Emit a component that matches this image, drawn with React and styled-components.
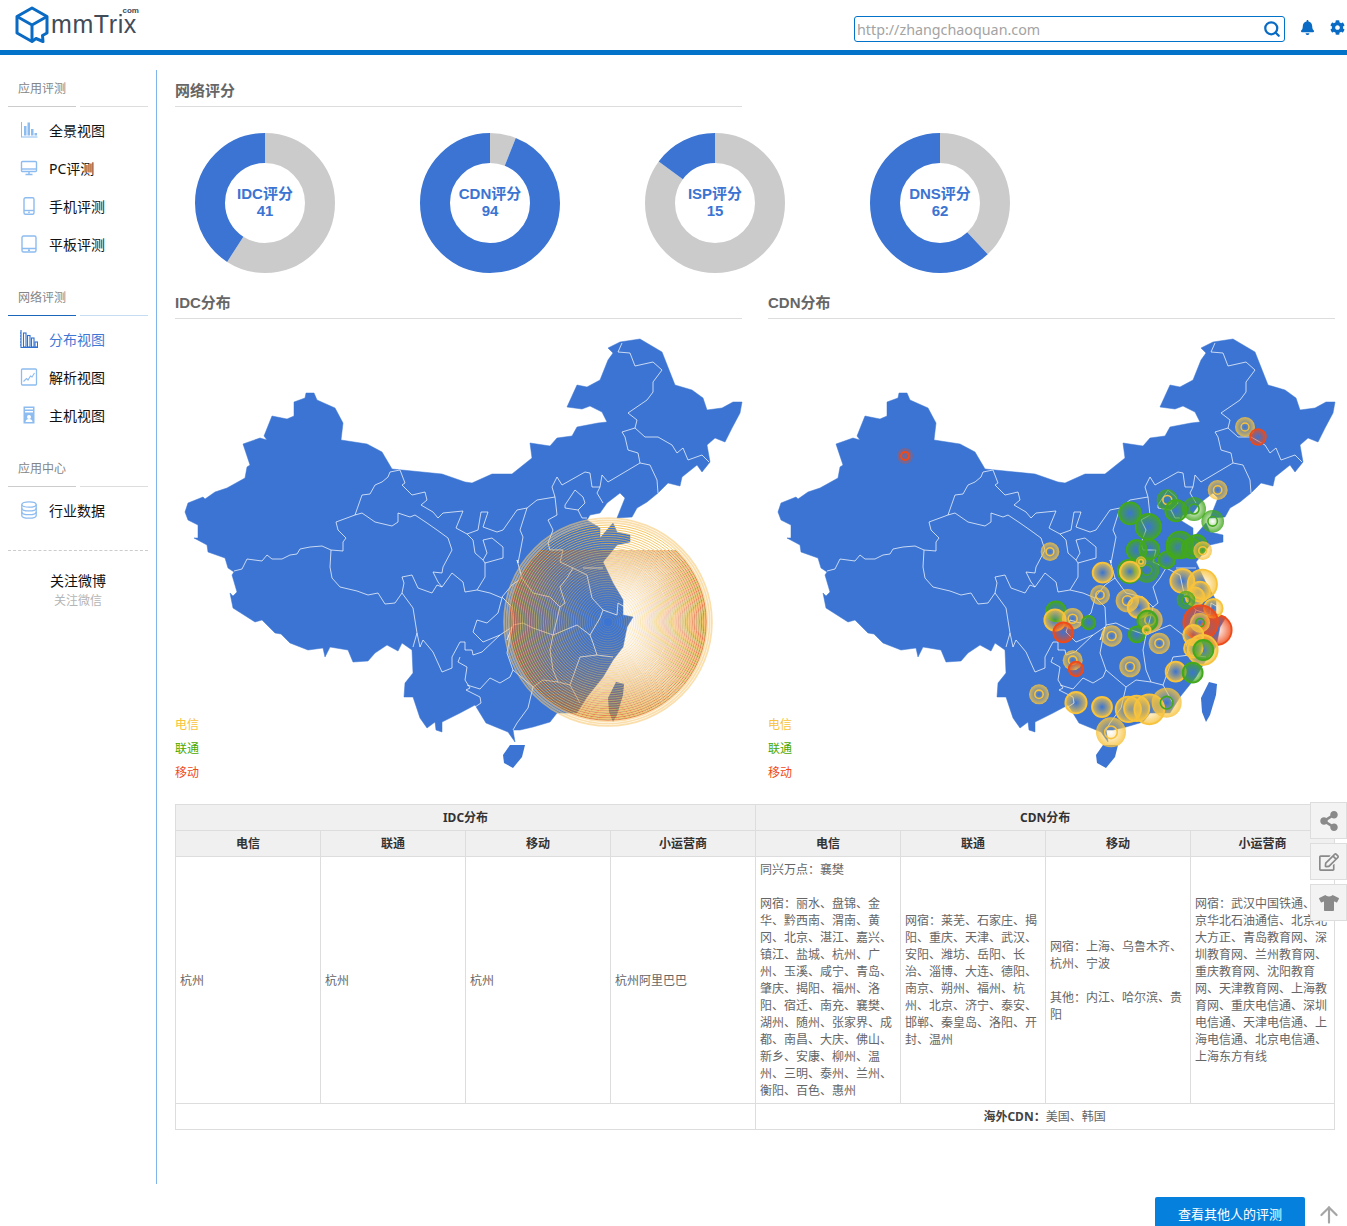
import React from "react";
import styled, { createGlobalStyle } from "styled-components";
import { FaBell, FaCog, FaShareAlt, FaRegEdit, FaTshirt } from "react-icons/fa";
import { Search, ArrowUp } from "lucide-react";

const BLUE = "#3b74d2";
const YELLOW = "#f8c33c";
const GREEN = "#42a81c";
const RED = "#ef4a18";

// outline of the country, traced in page px of the left map
const OUTLINE =
  "M185 512 188 503 203 497 205 499 215 492 227 488 245 478 247 467 250 465 243 444 260 438 267 440 264 436 272 416 287 419 294 416 294 402 305 398 306 393 314 393 317 400 335 408 343 423 341 440 367 444 382 452 392 469 402 470 422 472 442 474 465 482 472 483 492 474 512 474 532 458 530 443 550 446 557 438 572 436 577 427 598 423 607 422 602 412 590 406 582 409 567 407 577 385 587 387 600 380 608 360 613 353 608 348 620 342 640 339 662 352 675 385 692 390 703 398 707 410 722 408 733 402 742 402 740 413 732 428 725 442 715 438 707 445 710 462 702 472 697 465 682 477 680 486 668 483 658 493 647 502 637 508 632 517 617 518 625 498 620 493 607 503 600 513 590 515 587 520 600 528 600 538 613 523 617 532 630 535 630 542 617 545 603 562 613 583 623 600 623 615 633 617 627 627 623 647 613 660 603 677 587 697 577 713 557 713 550 722 533 727 520 730 513 730 515 742 508 732 486 723 475 705 460 713 442 722 442 732 436 730 435 722 427 728 420 718 413 697 404 697 405 683 413 673 412 650 402 643 398 651 387 645 375 653 368 661 353 662 348 650 330 647 325 657 323 648 308 650 290 643 281 634 275 633 262 620 255 622 233 608 230 593 233 596 237 592 232 575 234 572 228 568 225 558 208 552 207 545 194 538 198 538 198 525 188 520Z";
const HAINAN = "M503 755 510 745 525 745 522 757 513 768 504 763Z";
const TAIWAN = "M616 682 624 684 623 695 617 715 613 722 609 712 608 698Z";

const BORDERS = [
  "M234 571 242 569 247 559 262 561 267 555 272 559 282 559 290 555 297 554 300 549 310 547 322 546 331 550 343 551 343 542 346 538 338 530 336 522 355 515 362 495 370 494 375 485 382 482 388 477 390 472 400 470 405 483 402 485 412 495 425 492 427 500 421 505 433 512 438 518 443 513 463 511 456 528 467 534 478 530 481 512 488 512 483 527 497 532 503 530 517 510 527 508 537 500 555 497 552 487 557 477 562 485 585 472 590 473 592 487 600 487 602 475 608 482 640 463 638 453 628 450 625 437 622 432 635 428 637 420 628 413 647 400 653 392 653 382 662 370 653 362 635 366 630 353 618 352 622 343",
  "M355 515 362 513 375 522 392 526 398 522 398 513 410 517 415 515 427 523 437 530 448 538 452 550 443 567 442 573 433 572 438 582 442 587 437 585 432 593 418 588 412 575 402 577 404 583 402 593 395 603 385 604 378 593 368 595 357 591 340 587 332 578 330 567 331 550",
  "M402 593 413 608 417 633 413 647 M417 633 420 647 423 640 433 652 442 672 452 668 452 657 460 642 465 642 465 650 472 650 473 655 482 652 500 635 512 627 507 653 513 670",
  "M460 657 458 662 467 667 465 680 470 688 466 690 480 697 481 703 475 707 M467 685 480 689 490 678 500 683 510 677 513 670 533 687 528 708 517 723 513 730",
  "M442 587 452 573 463 582 465 592 477 590 490 593 502 598 498 613 487 623 477 620 473 632 483 642 500 635",
  "M477 590 485 577 485 563 503 558 503 547 492 538 483 540 487 553 483 560 475 553 473 540 467 534",
  "M485 563 483 560 M527 508 520 530 523 537 518 563 517 560 522 578 512 585 502 597 M522 578 533 593 550 597 560 607 565 603 560 587 567 578 573 568 560 562 563 550 550 550 548 543 553 530 548 520 557 515 555 497",
  "M565 505 575 490 583 497 585 503 578 510 565 508 565 505 M578 510 582 518 587 518",
  "M560 607 553 635 577 625 590 635 600 618 603 610 592 598 587 575 573 568 M583 568 603 568",
  "M603 610 617 615 618 603 625 607 M590 635 593 643 597 655 613 657 M597 655 580 657 570 685 580 703 M513 625 523 623 533 628 553 635 550 650 553 670 558 682 543 680 533 687",
  "M558 682 570 685 M502 597 512 607 513 625 507 640 512 627",
  "M640 463 650 465 657 480 658 493 M635 428 645 437 658 437 672 445 677 453 683 448 688 460 702 455 709 462 M597 493 600 487 M597 493 603 503",
];

// bubbles: x,y,r in the crop units of the east half, c colour, k kind (a edge ring, b halo with small core)
const Y = YELLOW, G = GREEN, R = RED;
const BUBBLES = [
  [593, 30, 30, Y, "b"], [442, 60, 32, G, "b", Y], [468, 92, 32, G, "a"], [330, 100, 33, G, "a"],
  [522, 87, 36, G, "b"], [578, 124, 34, G, "b"], [385, 140, 38, G, "a"], [90, 215, 28, Y, "b"],
  [480, 195, 40, G, "a"], [350, 210, 30, G, "a"], [388, 208, 30, G, "a"], [440, 240, 25, G, "a"],
  [530, 195, 30, G, "a"], [470, 205, 30, G, "a"], [515, 205, 30, G, "a"], [548, 212, 28, Y, "b"],
  [380, 270, 38, G, "b"], [328, 274, 35, G, "a"], [330, 275, 30, Y, "a"], [363, 245, 16, Y, "b"],
  [248, 278, 30, Y, "a"], [240, 345, 30, Y, "b"], [487, 303, 36, Y, "a"], [547, 313, 44, Y, "a"],
  [540, 335, 30, Y, "a"], [525, 350, 28, Y, "a"], [322, 362, 35, Y, "b"], [355, 382, 32, Y, "a"],
  [498, 360, 28, G, "b"], [108, 394, 30, G, "a"], [105, 420, 32, Y, "a"], [158, 416, 32, Y, "b"],
  [206, 428, 20, G, "a"], [130, 457, 30, R, "a"], [390, 420, 38, Y, "b"], [382, 422, 30, G, "a"],
  [590, 450, 45, R, "a"], [580, 385, 28, Y, "a"], [542, 428, 52, R, "a"], [540, 428, 30, Y, "b", G],
  [275, 468, 32, Y, "b"], [350, 463, 24, G, "a"], [380, 450, 12, Y, "a"], [418, 490, 32, Y, "b"],
  [520, 465, 30, Y, "a"], [548, 510, 45, Y, "a"], [520, 505, 28, Y, "a"], [550, 510, 30, G, "a"],
  [158, 541, 30, Y, "b"], [168, 567, 22, R, "a"], [467, 575, 30, Y, "a"], [518, 578, 30, G, "a"],
  [330, 560, 32, Y, "b"], [57, 643, 30, Y, "b"], [168, 668, 32, Y, "a"], [246, 681, 30, Y, "a"],
  [388, 688, 45, Y, "a"], [350, 685, 38, Y, "a"], [325, 688, 38, Y, "a"], [440, 668, 45, Y, "b", G],
  [273, 757, 45, Y, "b"],
];

const GlobalStyle = createGlobalStyle`
  html, body { margin: 0; padding: 0; background: #fff; overflow: hidden; }
  body { font-family: "Noto Sans", "Noto Sans CJK SC", sans-serif; color: #333; }
`;

const Page = styled.div`
  position: relative;
  width: 1347px;
  height: 1226px;
  overflow: hidden;
`;
const Header = styled.header`
  height: 50px;
  border-bottom: 5px solid #0273c9;
  display: flex;
  align-items: center;
  justify-content: space-between;
  padding: 0 2px 0 15px;
`;
const Logo = styled.div`
  position: relative;
  display: flex;
  align-items: center;
  gap: 2px;
`;
const LogoText = styled.span`
  font-family: "Liberation Sans", sans-serif;
  font-size: 25px;
  letter-spacing: 0.6px;
  color: #414c59;
  line-height: 22px;
  margin-top: -2px;
`;
const LogoCom = styled.span`
  position: absolute;
  right: -2px;
  top: 1px;
  font-family: "Liberation Sans", sans-serif;
  font-size: 8px;
  line-height: 8px;
  font-weight: bold;
  color: #414c59;
`;
const Tools = styled.div`
  display: flex;
  align-items: center;
  padding-top: 8px;
  color: #0a6bc4;
`;
const SearchBox = styled.div`
  width: 431px;
  height: 26px;
  box-sizing: border-box;
  border: 1px solid #0273c9;
  border-radius: 3px;
  display: flex;
  align-items: center;
  padding: 0 3px 0 2px;
  margin-right: 15px;
`;
const SearchInput = styled.input`
  flex: 1;
  border: none;
  outline: none;
  padding: 0;
  font-family: "Noto Sans", sans-serif;
  font-size: 14.3px;
  &::placeholder { color: #a3a3a3; opacity: 1; }
`;
const ToolIcon = styled.span`
  display: flex;
  font-size: 15px;
  margin-top: -4px;
  margin-right: ${(p) => p.$gap || 0}px;
`;

const Body = styled.div`
  display: flex;
  padding-top: 15px;
`;
const Sidebar = styled.aside`
  width: 157px;
  height: 1114px;
  box-sizing: border-box;
  border-right: 1px solid #7fb5ea;
  flex: none;
`;
const GroupTitle = styled.div`
  height: 36px;
  line-height: 38px;
  padding-left: 18px;
  font-size: 12px;
  color: #858585;
  margin-top: ${(p) => p.$top || 0}px;
`;
const Rule = styled.div`
  display: flex;
  gap: 4px;
  padding: 0 8px;
  margin-bottom: 4px;
`;
const RuleSeg = styled.i`
  display: block;
  width: 68px;
  height: 1px;
  background: ${(p) => p.$color};
`;
const Item = styled.div`
  height: 38px;
  display: flex;
  align-items: center;
  padding-left: 20px;
  font-size: 14px;
  color: ${(p) => (p.$active ? "#3f78d4" : "#111")};
  svg { width: 18px; height: 18px; margin-right: 11px; flex: none; }
`;
const Dashed = styled.div`
  margin: 21px 8px 0;
  width: 140px;
  border-top: 1px dashed #ccc;
`;
const Follow = styled.div`
  margin-top: 21px;
  text-align: center;
  font-size: 14px;
  color: #111;
  line-height: 18px;
  width: 156px;
`;
const FollowSub = styled.div`
  margin-top: 2px;
  font-size: 12px;
  color: #b5b5b5;
`;

const Main = styled.main`
  flex: 1;
  padding: 0 12px 0 18px;
  min-width: 0;
`;
const SectionTitle = styled.h3`
  margin: 0;
  height: 37px;
  line-height: 41px;
  box-sizing: border-box;
  border-bottom: 1px solid #ddd;
  font-family: "Liberation Sans", "Noto Sans CJK SC", sans-serif;
  font-size: 15px;
  font-weight: bold;
  color: #666;
`;
const ScoreHead = styled.div`
  width: 567px;
`;
const Donuts = styled.div`
  display: flex;
  gap: 85px;
  padding: 26px 0 0 20px;
`;
const Donut = styled.div`
  position: relative;
  width: 140px;
  height: 140px;
  svg { display: block; }
`;
const DonutLabel = styled.div`
  position: absolute;
  left: 0;
  right: 0;
  top: 52px;
  text-align: center;
  font-family: "Liberation Sans", "Noto Sans CJK SC", sans-serif;
  font-weight: bold;
  font-size: 15px;
  line-height: 17px;
  color: ${BLUE};
`;
const Maps = styled.div`
  display: flex;
  gap: 26px;
  margin-top: 9px;
`;
const MapColumn = styled.section`
  width: 567px;
`;
const MapBox = styled.div`
  position: relative;
  height: 485px;
  margin-top: 11px;
`;
const MapSvg = styled.svg`
  display: block;
`;
const Legend = styled.ul`
  position: absolute;
  left: 0;
  top: 383px;
  margin: 0;
  padding: 0;
  list-style: none;
  font-size: 12px;
  line-height: 24px;
`;
const LegendItem = styled.li`
  color: ${(p) => p.$color};
`;
const Table = styled.table`
  width: 1160px;
  margin-top: -11px;
  border-collapse: collapse;
  table-layout: fixed;
  font-size: 12px;
  line-height: 17px;
  color: #666;
`;
const Col = styled.col`
  width: ${(p) => p.$w || 145}px;
`;
const Th = styled.th`
  height: 25px;
  padding: 0;
  background: #f0f0f0;
  border: 1px solid #ddd;
  color: #333;
  font-weight: bold;
`;
const Td = styled.td`
  border: 1px solid #ddd;
  padding: 4px 5px 4px 4px;
  vertical-align: middle;
  text-align: ${(p) => p.$align || "left"};
  height: ${(p) => p.$h || "auto"};
`;
const Strong = styled.strong`
  color: #444;
`;

const SideDock = styled.div`
  position: absolute;
  right: 0;
  top: 802px;
  display: flex;
  flex-direction: column;
  gap: 4px;
`;
const DockButton = styled.div`
  width: 37px;
  height: 37px;
  box-sizing: border-box;
  background: #f3f3f3;
  border: 1px solid #ddd;
  display: flex;
  align-items: center;
  justify-content: center;
  color: #8a8a8a;
  font-size: 20px;
`;
const BottomBar = styled.div`
  display: flex;
  justify-content: flex-end;
  align-items: flex-start;
  gap: 11px;
  padding-right: 5px;
  margin-top: 13px;
`;
const OthersButton = styled.button`
  width: 150px;
  height: 40px;
  border: none;
  border-radius: 2px 2px 0 0;
  background: #0580dd;
  color: #fff;
  font-family: inherit;
  font-size: 13px;
  padding: 0 0 8px;
`;
const UpArrow = styled.span`
  display: flex;
  color: #a5a5a5;
  margin-top: 5px;
`;

const iconBlue = "#8dbcf0";

const IconBars = () => (
  <svg viewBox="0 0 18 18" fill={iconBlue}>
    <path d="M1 1v15.500h16.500v-1H2V1z" />
    <rect x="4" y="5" width="2.500" height="9.500" />
    <rect x="7.500" y="1.500" width="2.500" height="13" />
    <rect x="11" y="8" width="2.500" height="6.500" />
    <rect x="14.500" y="12" width="2.500" height="2.500" />
  </svg>
);
const IconMonitor = () => (
  <svg viewBox="0 0 18 18" fill="none" stroke={iconBlue} strokeWidth="1.400">
    <rect x="1.500" y="2.500" width="15" height="10" rx="1" />
    <path d="M1.500 10h15" />
    <path d="M9 13v2.500M5.500 15.500h7" />
  </svg>
);
const IconPhone = () => (
  <svg viewBox="0 0 18 18" fill="none" stroke={iconBlue} strokeWidth="1.400">
    <rect x="4" y="0.800" width="10" height="16.400" rx="1.500" />
    <path d="M4 13.500h10" />
    <path d="M8.200 15.300h1.600" />
  </svg>
);
const IconTablet = () => (
  <svg viewBox="0 0 18 18" fill="none" stroke={iconBlue} strokeWidth="1.400">
    <rect x="2" y="1" width="14" height="16" rx="1.500" />
    <path d="M2 13.500h14M8 15.300h2" />
  </svg>
);
const IconDist = () => (
  <svg viewBox="0 0 18 18" fill="none" stroke="#2f6fd0" strokeWidth="1.100">
    <path d="M1 0v17.500h17" />
    <path d="M0 3h1M0 6h1M0 9h1M0 12h1M0 15h1" />
    <rect x="3.500" y="3" width="2.500" height="14" />
    <rect x="7.500" y="5.500" width="2.500" height="11.500" />
    <rect x="11.500" y="8" width="2.500" height="9" />
    <rect x="15" y="12" width="2.500" height="5" />
  </svg>
);
const IconLine = () => (
  <svg viewBox="0 0 18 18" fill="none" stroke={iconBlue} strokeWidth="1.100">
    <rect x="1.500" y="1" width="15" height="16" rx="1" strokeWidth="1.300" />
    <path d="M3.500 13.500l3-3 1.500 1.500 2.500-4 1.500 1 2.500-4" />
  </svg>
);
const IconHost = () => (
  <svg viewBox="0 0 18 18" fill={iconBlue}>
    <path fillRule="evenodd" d="M3.500 0.500h11v17h-11zM5 2v1.500h8V2zM5 5v1.500h8V5zM9 9a2 2 0 100 4 2 2 0 000-4zM5.500 16h7c0-2-1.500-3-3.500-3s-3.500 1-3.500 3z" />
  </svg>
);
const IconDb = () => (
  <svg viewBox="0 0 18 18" fill="none" stroke={iconBlue} strokeWidth="1.300">
    <ellipse cx="9" cy="3.500" rx="7.200" ry="2.700" />
    <path d="M1.800 3.500v11c0 1.500 3.200 2.700 7.200 2.700s7.200-1.200 7.200-2.700v-11" />
    <path d="M1.800 7.200c0 1.500 3.200 2.700 7.200 2.700s7.200-1.200 7.200-2.700M1.800 11c0 1.500 3.200 2.700 7.200 2.700s7.200-1.200 7.200-2.700" />
  </svg>
);

const LogoMark = () => (
  <svg width="34" height="38" viewBox="0 0 34 38" fill="none" stroke="#0a6bc4" strokeWidth="3" strokeLinejoin="round">
    <path d="M17 2 32 10.500V27L27.500 29.500 28 35.500 21 32.500 17 35.500 2 27V10.500Z" />
    <path d="M2 10.500 17 19 32 10.500M17 19V35" />
  </svg>
);

function ScoreDonut({ name, score }) {
  const r = 55;
  const len = 2 * Math.PI * r;
  const gray = (len * (100 - score)) / 100;
  return (
    <Donut>
      <svg width="140" height="140" viewBox="0 0 140 140">
        <g transform="rotate(-90 70 70)" fill="none" strokeWidth="30">
          <circle cx="70" cy="70" r={r} stroke="#cbcbcb" strokeDasharray={`${gray} ${len - gray}`} />
          <circle cx="70" cy="70" r={r} stroke={BLUE} strokeDasharray={`${len - gray} ${gray}`} strokeDashoffset={-gray} />
        </g>
      </svg>
      <DonutLabel>{name}评分<br />{score}</DonutLabel>
    </Donut>
  );
}

function ChinaShape() {
  return (
    <>
      <path d={OUTLINE} fill={BLUE} stroke={BLUE} strokeWidth="0.500" strokeLinejoin="round" />
      <path d={HAINAN} fill={BLUE} />
      <path d={TAIWAN} fill={BLUE} />
      {BORDERS.map((d, i) => (
        <path key={i} d={d} fill="none" stroke="#fff" strokeOpacity="0.8" strokeWidth="0.900" strokeLinejoin="round" />
      ))}
    </>
  );
}

function Ripple() {
  const rings = [];
  for (let r = 5; r <= 105; r += 2.300) {
    const k = r / 97;
    if (r > 97) {
      rings.push(<circle key={"o" + r} cx="608" cy="622" r={r} fill="none" stroke="#f6c977" strokeOpacity="0.600" strokeWidth="1.800" />);
      continue;
    }
    rings.push(<circle key={"y" + r} cx="608" cy="622" r={r} fill="none" stroke="#f6b93c" strokeOpacity={0.12 + k * 0.7} strokeWidth="1" />);
    rings.push(<circle key={"g" + r} cx="608" cy="622" r={r + 0.700} fill="none" stroke="#6aa82a" strokeOpacity={k * k * 0.55} strokeWidth="0.700" clipPath="url(#belowLine)" />);
    rings.push(<circle key={"r" + r} cx="608" cy="622" r={r + 1.300} fill="none" stroke="#e8531c" strokeOpacity={k * k * 0.9} strokeWidth="0.900" clipPath="url(#belowLine)" />);
  }
  return (
    <g>
      <clipPath id="belowLine">
        <rect x="490" y="550" width="240" height="190" />
      </clipPath>
      {rings}
    </g>
  );
}

function Bubbles() {
  const colors = [Y, G, R];
  return (
    <g>
      <defs>
        {colors.map((c) => (
          <radialGradient key={c} id={"fade" + c.slice(1)}>
            <stop offset="0" stopColor={c} stopOpacity="0" />
            <stop offset="0.600" stopColor={c} stopOpacity="0.500" />
            <stop offset="1" stopColor={c} stopOpacity="0.850" />
          </radialGradient>
        ))}
      </defs>
      {BUBBLES.map(([x, y, r, c, k, inner], i) => {
        const cx = 427 + x / 3;
        const cy = 480 + y / 3;
        const rad = r / 3;
        if (k === "a") {
          return <circle key={i} cx={cx} cy={cy} r={rad} fill={`url(#fade${c.slice(1)})`} stroke={c} strokeWidth="1.800" />;
        }
        return (
          <g key={i}>
            <circle cx={cx} cy={cy} r={rad} fill={`url(#fade${c.slice(1)})`} />
            <circle cx={cx} cy={cy} r={rad * 0.42} fill="none" stroke={inner || c} strokeWidth="1.600" />
          </g>
        );
      })}
      <circle cx="652" cy="427" r="10" fill={`url(#fade${Y.slice(1)})`} />
      <circle cx="652" cy="427" r="4" fill="none" stroke={Y} strokeWidth="1.300" />
      <circle cx="665" cy="437" r="8" fill={`url(#fade${R.slice(1)})`} stroke={R} strokeWidth="1.400" />
      <circle cx="312" cy="456" r="8" fill={R} fillOpacity="0.300" />
      <circle cx="312" cy="456" r="4" fill="none" stroke={R} strokeWidth="2" />
    </g>
  );
}

function ChinaMap({ title, children }) {
  return (
    <MapColumn>
      <SectionTitle>{title}</SectionTitle>
      <MapBox>
        <MapSvg width="570" height="445" viewBox="175 330 570 445">
          <ChinaShape />
          {children}
        </MapSvg>
        <Legend>
          <LegendItem $color={YELLOW}>电信</LegendItem>
          <LegendItem $color="#4aa800">联通</LegendItem>
          <LegendItem $color={RED}>移动</LegendItem>
        </Legend>
      </MapBox>
    </MapColumn>
  );
}

export default function App() {
  return (
    <Page>
      <GlobalStyle />
      <Header>
        <Logo>
          <LogoMark />
          <LogoText>mmTrix</LogoText>
          <LogoCom>com</LogoCom>
        </Logo>
        <Tools>
          <SearchBox>
            <SearchInput placeholder="http://zhangchaoquan.com" />
            <Search size={18} strokeWidth={3} />
          </SearchBox>
          <ToolIcon $gap={15}><FaBell /></ToolIcon>
          <ToolIcon><FaCog /></ToolIcon>
        </Tools>
      </Header>

      <Body>
        <Sidebar>
          <GroupTitle>应用评测</GroupTitle>
          <Rule><RuleSeg $color="#ccc" /><RuleSeg $color="#ddd" /></Rule>
          <Item><IconBars />全景视图</Item>
          <Item><IconMonitor />PC评测</Item>
          <Item><IconPhone />手机评测</Item>
          <Item><IconTablet />平板评测</Item>

          <GroupTitle $top={16}>网络评测</GroupTitle>
          <Rule><RuleSeg $color="#1a66bb" /><RuleSeg $color="#c5dcf2" /></Rule>
          <Item $active><IconDist />分布视图</Item>
          <Item><IconLine />解析视图</Item>
          <Item><IconHost />主机视图</Item>

          <GroupTitle $top={16}>应用中心</GroupTitle>
          <Rule><RuleSeg $color="#ccc" /><RuleSeg $color="#ddd" /></Rule>
          <Item><IconDb />行业数据</Item>

          <Dashed />
          <Follow>
            关注微博
            <FollowSub>关注微信</FollowSub>
          </Follow>
        </Sidebar>

        <Main>
          <ScoreHead><SectionTitle>网络评分</SectionTitle></ScoreHead>
          <Donuts>
            <ScoreDonut name="IDC" score={41} />
            <ScoreDonut name="CDN" score={94} />
            <ScoreDonut name="ISP" score={15} />
            <ScoreDonut name="DNS" score={62} />
          </Donuts>

          <Maps>
            <ChinaMap title="IDC分布"><Ripple /></ChinaMap>
            <ChinaMap title="CDN分布"><Bubbles /></ChinaMap>
          </Maps>

          <Table>
            <colgroup>
              <Col /><Col /><Col /><Col /><Col /><Col /><Col /><Col $w={144} />
            </colgroup>
            <thead>
              <tr>
                <Th colSpan={4}>IDC分布</Th>
                <Th colSpan={4}>CDN分布</Th>
              </tr>
              <tr>
                <Th>电信</Th><Th>联通</Th><Th>移动</Th><Th>小运营商</Th>
                <Th>电信</Th><Th>联通</Th><Th>移动</Th><Th>小运营商</Th>
              </tr>
            </thead>
            <tbody>
              <tr>
                <Td>杭州</Td>
                <Td>杭州</Td>
                <Td>杭州</Td>
                <Td>杭州阿里巴巴</Td>
                <Td>
                  同兴万点：襄樊<br /><br />
                  网宿：丽水、盘锦、金华、黔西南、渭南、黄冈、北京、湛江、嘉兴、镇江、盐城、杭州、广州、玉溪、咸宁、青岛、肇庆、揭阳、福州、洛阳、宿迁、南充、襄樊、湖州、随州、张家界、成都、南昌、大庆、佛山、新乡、安康、柳州、温州、三明、泰州、兰州、衡阳、百色、惠州
                </Td>
                <Td>
                  网宿：莱芜、石家庄、揭阳、重庆、天津、武汉、安阳、潍坊、岳阳、长治、淄博、大连、德阳、南京、朔州、福州、杭州、北京、济宁、泰安、邯郸、秦皇岛、洛阳、开封、温州
                </Td>
                <Td>
                  网宿：上海、乌鲁木齐、杭州、宁波<br /><br />
                  其他：内江、哈尔滨、贵阳
                </Td>
                <Td>
                  网宿：武汉中国铁通、北京华北石油通信、北京北大方正、青岛教育网、深圳教育网、兰州教育网、重庆教育网、沈阳教育网、天津教育网、上海教育网、重庆电信通、深圳电信通、天津电信通、上海电信通、北京电信通、上海东方有线
                </Td>
              </tr>
              <tr>
                <Td colSpan={4} $h="17px" />
                <Td colSpan={4} $align="center"><Strong>海外CDN：</Strong>美国、韩国</Td>
              </tr>
            </tbody>
          </Table>
        </Main>
      </Body>

      <BottomBar>
        <OthersButton>查看其他人的评测</OthersButton>
        <UpArrow><ArrowUp size={26} strokeWidth={2} /></UpArrow>
      </BottomBar>

      <SideDock>
        <DockButton><FaShareAlt /></DockButton>
        <DockButton><FaRegEdit /></DockButton>
        <DockButton><FaTshirt /></DockButton>
      </SideDock>
    </Page>
  );
}
